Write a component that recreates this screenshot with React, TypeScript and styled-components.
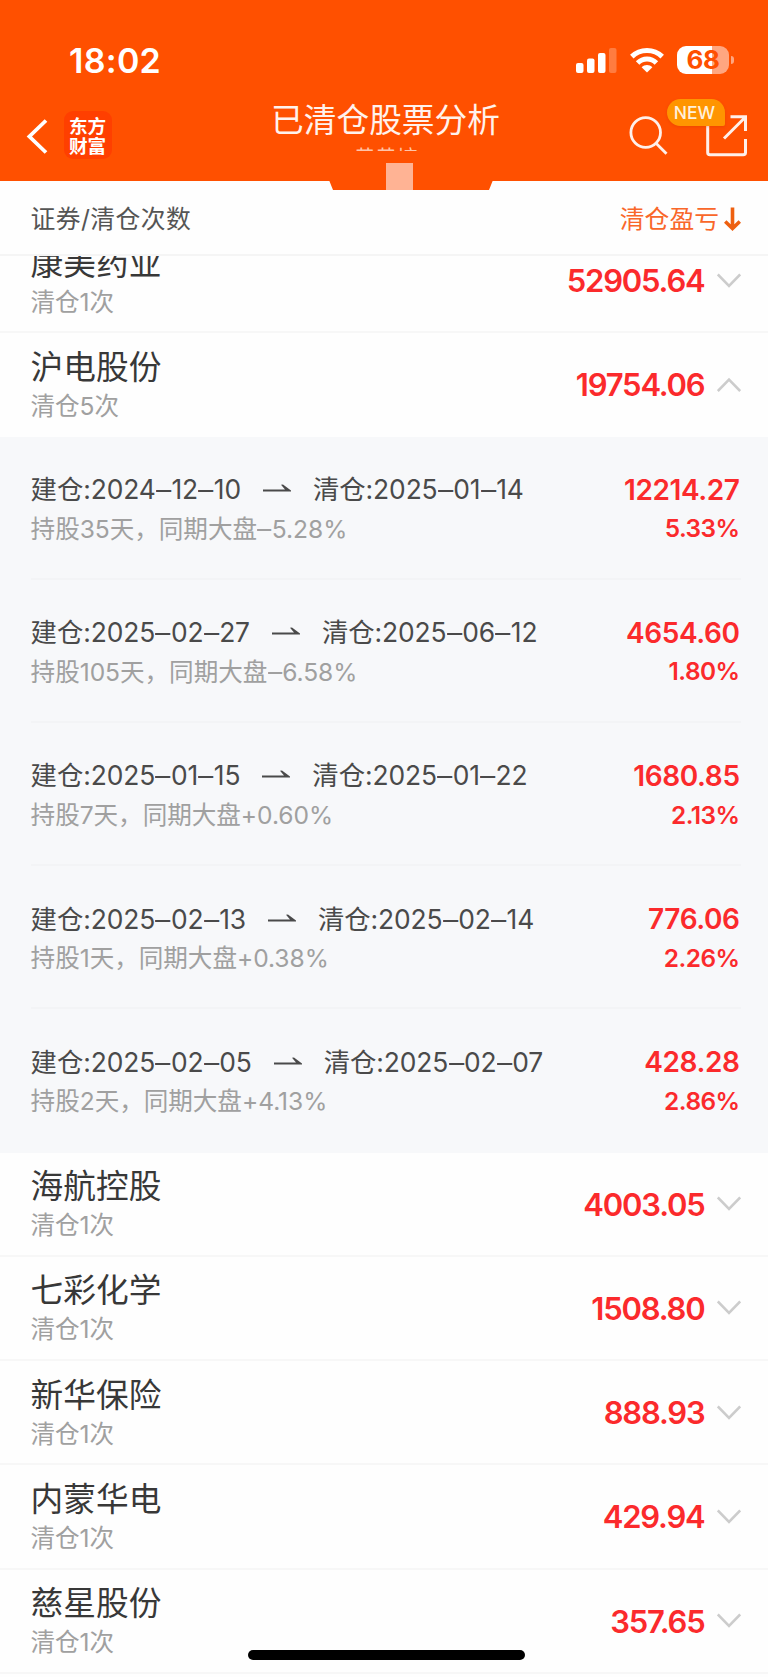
import React from "react";
import styled, { createGlobalStyle } from "styled-components";

const GlobalStyle = createGlobalStyle`
  * { box-sizing: border-box; }
  html, body { margin: 0; padding: 0; background: #fff; }
  body { font-family: Inter, "Noto Sans CJK SC", sans-serif; }
`;

const Screen = styled.div`
  position: relative;
  width: 768px;
  height: 1677px;
  overflow: hidden;
  background: #fefefe;
  display: flex;
  flex-direction: column;
`;

const Header = styled.header`
  position: relative;
  flex: none;
  height: 181px;
  background: #ff5000;
  color: #fff;
`;

const StatusBar = styled.div`
  display: flex;
  align-items: center;
  justify-content: space-between;
  height: 92px;
  padding: 28px 35px 0 69px;
`;

const Clock = styled.div`
  padding-top: 2px;
  font-size: 34px;
  line-height: 40px;
  font-weight: 600;
  letter-spacing: 0.3px;
`;

const StatusIcons = styled.div`
  display: flex;
  align-items: center;
  gap: 13px;
`;

const Battery = styled.div`
  position: relative;
  width: 52px;
  height: 28px;
  border-radius: 9px;
  background: linear-gradient(to right, #fff 68%, #ffa680 68%);
  color: #ff5000;
  font-size: 26px;
  line-height: 28px;
  font-weight: 700;
  text-align: center;
  letter-spacing: -0.5px;
  margin-right: 4px;

  &::after {
    content: "";
    position: absolute;
    left: 53.5px;
    top: 10px;
    width: 3px;
    height: 8px;
    border-radius: 0 3px 3px 0;
    background: #ffa680;
  }
`;

const NavBar = styled.div`
  display: grid;
  grid-template-columns: 240px 1fr 240px;
  height: 89px;
`;

const NavLeft = styled.div`
  display: flex;
  align-items: flex-start;
  gap: 17px;
  padding: 19px 0 0 26px;
`;

const BackIcon = styled.svg`
  margin-top: 8px;
`;

const Logo = styled.div`
  width: 48px;
  height: 48px;
  margin-left: -1px;
  padding: 5px 0 0 5px;
  border-radius: 9px;
  background: #ff3f00;
  font-size: 18.6px;
  line-height: 20px;
  font-weight: 700;
`;

const TitleBlock = styled.div`
  display: flex;
  flex-direction: column;
  align-items: center;
  padding-top: 8px;
`;

const Title = styled.h1`
  margin: 0 0 0 3px;
  font-size: 32.7px;
  line-height: 40px;
  font-weight: 400;
  white-space: nowrap;
  color: #fff2ec;
`;

const Subtitle = styled.div`
  height: 11px;
  margin-left: 4px;
  overflow: hidden;
  font-size: 21.4px;
  line-height: 36px;
  color: #ffc4a8;
`;

const NavRight = styled.div`
  position: relative;
  display: flex;
  align-items: flex-start;
  justify-content: flex-end;
  gap: 38px;
  padding: 23px 20px 0 0;
`;

const NewBadge = styled.span`
  position: absolute;
  left: 139px;
  top: 7px;
  width: 58px;
  height: 27px;
  border-radius: 14px 14px 2px 14px;
  background: #ff9500;
  box-shadow: 0 1px 3px rgba(200, 50, 0, 0.3);
  font-size: 17.5px;
  line-height: 28px;
  font-weight: 500;
  text-align: center;
  padding-right: 3px;
  color: #fff0dc;
`;

const Notch = styled.div`
  position: absolute;
  left: 329px;
  top: 180px;
  width: 164px;
  height: 10px;
  background: #ff5000;
  clip-path: polygon(0 0, 100% 0, 160px 100%, 4px 100%);
`;

const NotchMark = styled.div`
  position: absolute;
  left: 386px;
  top: 163px;
  width: 27px;
  height: 27px;
  background: #ffb394;
`;

const ColumnHead = styled.div`
  flex: none;
  display: flex;
  justify-content: space-between;
  align-items: center;
  height: 75px;
  padding: 2px 27px 0 30.6px;
  border-bottom: 2px solid #f5f5f5;
  font-size: 24.8px;
  line-height: 36px;
  color: #555;
`;

const HeadLabel = styled.div`
  letter-spacing: 0.4px;
`;

const SortLabel = styled.div`
  display: flex;
  align-items: center;
  gap: 5px;
  color: #f9672a;
`;

const List = styled.main`
  flex: 1;
  min-height: 0;
  overflow: hidden;
`;

const Row = styled.section<{ $cut?: boolean; $open?: boolean }>`
  display: flex;
  justify-content: space-between;
  height: ${(p) => (p.$open ? "103.3px" : "104.3px")};
  margin-top: ${(p) => (p.$cut ? "-27px" : "0")};
  padding: 0 27px 0 30.6px;
  border-bottom: 2px solid ${(p) => (p.$open ? "transparent" : "#f7f7f7")};
`;

const Name = styled.div`
  margin-top: 13.5px;
  font-size: 32.7px;
  line-height: 40px;
  color: #383838;
`;

const Times = styled.div`
  font-size: 24.6px;
  line-height: 38px;
  letter-spacing: -0.1px;
  color: #a0a0a0;
`;

const Amount = styled.div`
  display: flex;
  align-items: center;
  height: 40px;
  margin-top: 31.5px;
  gap: 12.5px;
  font-size: 31px;
  font-weight: 600;
  letter-spacing: -1.2px;
  color: #fb2a2c;
`;

const Panel = styled.div`
  background: #f7f8fa;
  padding: 0 27px 0 30.6px;
`;

const Trade = styled.div`
  display: flex;
  justify-content: space-between;
  height: 143.2px;
  padding-top: 34px;
  border-bottom: 2px solid #f3f4f6;

  &:last-child { border-bottom: 0; }
`;

const Dates = styled.div`
  display: flex;
  align-items: center;
  height: 38px;
  padding-bottom: 1px;
  font-size: 26.4px;
  line-height: 38px;
  letter-spacing: -0.1px;
  color: #4a4a4a;
  white-space: nowrap;
`;

const Dash = styled.span`
  display: inline-block;
  margin: 0 1.3px;
  transform: scaleX(1.15);
`;

const DateArrow = styled.svg`
  margin: 0 22px;
`;

const Note = styled.div`
  margin-top: 1px;
  font-size: 24.6px;
  line-height: 38px;
  letter-spacing: -0.05px;
  color: #a0a0a0;
`;

const Profit = styled.div`
  text-align: right;
  font-size: 28px;
  line-height: 38px;
  font-weight: 600;
  letter-spacing: -0.4px;
  color: #fb2a2c;
  margin-right: 1.4px;
`;

const Percent = styled.div`
  margin-top: 0.6px;
  font-size: 24.4px;
  line-height: 38px;
  letter-spacing: -0.5px;
`;

const HomeIndicator = styled.div`
  position: absolute;
  left: 248px;
  bottom: 17px;
  width: 277px;
  height: 10px;
  border-radius: 5px;
  background: #000;
`;

type Stock = { name: string; times: number; amount: string };
type TradeInfo = { open: string; close: string; days: number; market: string; profit: string; pct: string };

const trades: TradeInfo[] = [
  { open: "2024–12–10", close: "2025–01–14", days: 35, market: "–5.28%", profit: "12214.27", pct: "5.33%" },
  { open: "2025–02–27", close: "2025–06–12", days: 105, market: "–6.58%", profit: "4654.60", pct: "1.80%" },
  { open: "2025–01–15", close: "2025–01–22", days: 7, market: "+0.60%", profit: "1680.85", pct: "2.13%" },
  { open: "2025–02–13", close: "2025–02–14", days: 1, market: "+0.38%", profit: "776.06", pct: "2.26%" },
  { open: "2025–02–05", close: "2025–02–07", days: 2, market: "+4.13%", profit: "428.28", pct: "2.86%" },
];

const stocks: Stock[] = [
  { name: "海航控股", times: 1, amount: "4003.05" },
  { name: "七彩化学", times: 1, amount: "1508.80" },
  { name: "新华保险", times: 1, amount: "888.93" },
  { name: "内蒙华电", times: 1, amount: "429.94" },
  { name: "慈星股份", times: 1, amount: "357.65" },
];

function Dashed({ text }: { text: string }) {
  return (
    <span>
      {text.split("–").map((part, i) => (
        <React.Fragment key={i}>
          {i > 0 && <Dash>–</Dash>}
          {part}
        </React.Fragment>
      ))}
    </span>
  );
}

function StockRow({ stock, cut, open }: { stock: Stock; cut?: boolean; open?: boolean }) {
  return (
    <Row $cut={cut} $open={open}>
      <div>
        <Name>{stock.name}</Name>
        <Times>清仓{stock.times}次</Times>
      </div>
      <Amount>
        {stock.amount}
        <svg width="24" height="16" viewBox="0 0 24 16" fill="none" stroke="#cccccc" strokeWidth="2.6">
          <path d={open ? "M0.8 14L12 2.5L23.2 14" : "M0.8 1.5L12 13L23.2 1.5"} />
        </svg>
      </Amount>
    </Row>
  );
}

export default function App() {
  return (
    <Screen>
      <GlobalStyle />
      <Header>
        <StatusBar>
          <Clock>18:02</Clock>
          <StatusIcons>
            <svg width="41" height="27" viewBox="0 0 41 27" fill="#fff">
              <rect x="0" y="16" width="7.5" height="10" rx="2" />
              <rect x="11" y="11.5" width="7.5" height="14.5" rx="2" />
              <rect x="22" y="6" width="7.5" height="20" rx="2" />
              <rect x="33" y="1" width="7.5" height="25" rx="2" opacity="0.25" />
            </svg>
            <svg width="34" height="27" viewBox="0 0 34 27" fill="none" stroke="#fff" strokeWidth="5">
              <path d="M1.8 9.6C10.2 1.4 23.8 1.4 32.2 9.6" />
              <path d="M7.6 16C13 10.7 21 10.7 26.4 16" />
              <path d="M11.6 20.2C14.6 17.4 19.4 17.4 22.4 20.2L17 25.6Z" fill="#fff" stroke="none" />
            </svg>
            <Battery>68</Battery>
          </StatusIcons>
        </StatusBar>
        <NavBar>
          <NavLeft>
            <BackIcon width="22" height="35" viewBox="0 0 22 35" fill="none" stroke="#fff" strokeWidth="3.8">
              <path d="M20 1.5L3.4 17.5L20 33.5" />
            </BackIcon>
            <Logo>
              东方
              <br />
              财富
            </Logo>
          </NavLeft>
          <TitleBlock>
            <Title>已清仓股票分析</Title>
            <Subtitle>黄黄培</Subtitle>
          </TitleBlock>
          <NavRight>
            <svg width="40" height="42" viewBox="0 0 40 42" fill="none" stroke="#fff0ea" strokeWidth="2.8">
              <circle cx="17.7" cy="17.5" r="14.8" />
              <path d="M27.8 28L38.5 38.8" />
            </svg>
            <svg width="42" height="42" viewBox="0 0 42 42" fill="none" stroke="#fff0ea" strokeWidth="3">
              <path d="M1.7 8V37.5Q1.7 39.8 4 39.8H37.2Q39.5 39.8 39.5 37.5V24" />
              <path d="M18 23.5L39 2.5M24.5 1.8H39.5V16" />
            </svg>
            <NewBadge>NEW</NewBadge>
          </NavRight>
        </NavBar>
        <Notch />
        <NotchMark />
      </Header>
      <ColumnHead>
        <HeadLabel>证券/清仓次数</HeadLabel>
        <SortLabel>
          清仓盈亏
          <svg width="17" height="24" viewBox="0 0 17 24" fill="none" stroke="#ee6010" strokeWidth="3.6">
            <path d="M8.5 0.5V21M1.2 14.5L8.5 21.5L15.8 14.5" />
          </svg>
        </SortLabel>
      </ColumnHead>
      <List>
        <StockRow cut stock={{ name: "康美药业", times: 1, amount: "52905.64" }} />
        <StockRow open stock={{ name: "沪电股份", times: 5, amount: "19754.06" }} />
        <Panel>
          {trades.map((t) => (
            <Trade key={t.open}>
              <div>
                <Dates>
                  <Dashed text={`建仓:${t.open}`} />
                  <DateArrow width="28" height="10" viewBox="0 0 28 10" fill="#4a4a4a">
                    <path d="M0 5.6H22L18 0.8L20 0.4L28 6.6V7.4H0Z" />
                  </DateArrow>
                  <Dashed text={`清仓:${t.close}`} />
                </Dates>
                <Note>
                  持股{t.days}天，同期大盘<Dashed text={t.market} />
                </Note>
              </div>
              <Profit>
                {t.profit}
                <Percent>{t.pct}</Percent>
              </Profit>
            </Trade>
          ))}
        </Panel>
        {stocks.map((s) => (
          <StockRow key={s.name} stock={s} />
        ))}
      </List>
      <HomeIndicator />
    </Screen>
  );
}
